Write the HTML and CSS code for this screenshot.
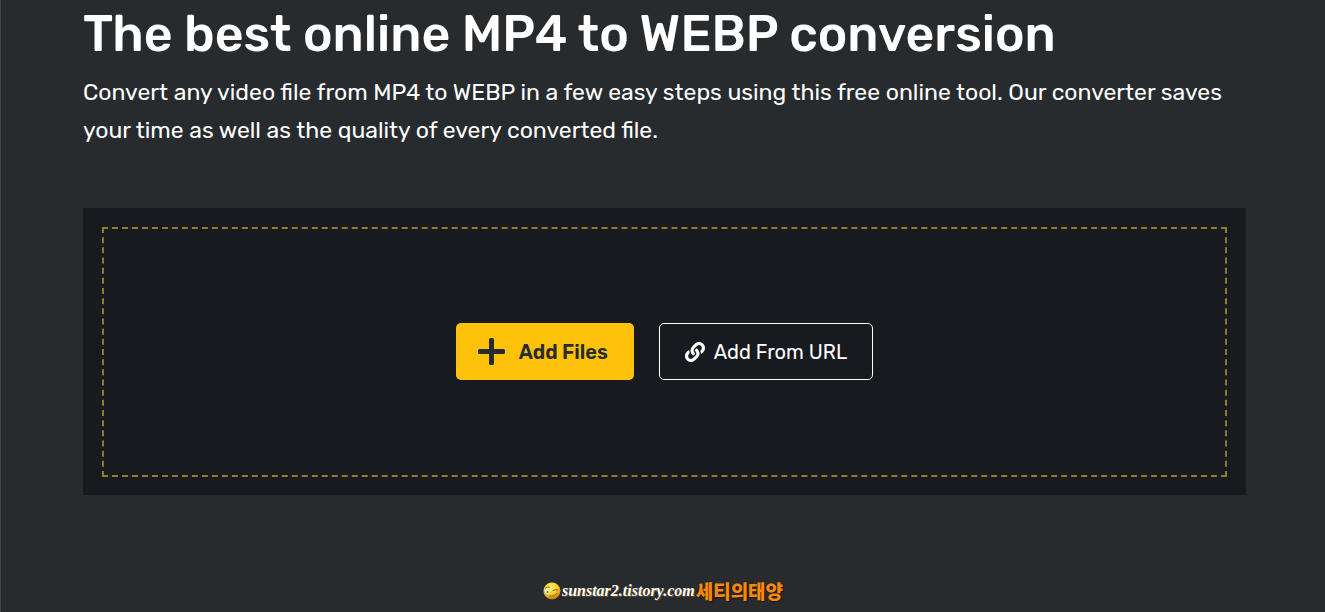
FILE: index.html
```
<!DOCTYPE html>
<html lang="en">
<head>
    <meta charset="UTF-8">
    <meta name="viewport" content="width=device-width, initial-scale=1.0">
    <title>MP4 to WEBP Converter</title>
    <link rel="stylesheet" href="styles.css">
</head>
<body>

<main class="container">
    <h1>The best online MP4 to WEBP conversion</h1>
    <p class="intro">Convert any video file from MP4 to WEBP in a few easy steps using this free online tool. Our converter saves your time as well as the quality of every converted file.</p>

    <!-- Upload area -->
    <div class="upload">
        <div class="drop-area">
            <button type="button" class="btn btn-files">
                <svg class="icon-plus" viewBox="0 0 27 27" aria-hidden="true">
                    <path fill="currentColor" d="M12.500 0h2a1.500 1.500 0 0 1 1.500 1.500V11h9.500A1.500 1.500 0 0 1 27 12.500v2a1.500 1.500 0 0 1-1.500 1.500H16v9.500a1.500 1.500 0 0 1-1.500 1.500h-2a1.500 1.500 0 0 1-1.500-1.500V16H1.500A1.500 1.500 0 0 1 0 14.500v-2A1.500 1.500 0 0 1 1.500 11H11V1.500A1.500 1.500 0 0 1 12.500 0z"/>
                </svg>
                Add Files
            </button>
            <button type="button" class="btn btn-url">
                <svg class="icon-link" viewBox="0 0 512 512" aria-hidden="true">
                    <path fill="currentColor" d="M326.612 185.391c59.747 59.809 58.927 155.698.36 214.59-.11.12-.24.25-.36.37l-67.2 67.2c-59.27 59.27-155.699 59.262-214.96 0-59.27-59.26-59.27-155.7 0-214.96l37.106-37.106c9.84-9.84 26.786-3.3 27.294 10.606.648 17.722 3.826 35.527 9.69 52.721 1.986 5.822.567 12.262-3.783 16.612l-13.087 13.087c-28.026 28.026-28.905 73.660-1.155 101.960 28.024 28.579 74.086 28.749 102.325.510l67.200-67.190c28.191-28.191 28.073-73.757 0-101.830-3.701-3.694-7.429-6.564-10.341-8.569a16.037 16.037 0 0 1-6.947-12.606c-.396-10.567 3.348-21.456 11.698-29.806l21.054-21.055c5.521-5.521 14.182-6.199 20.584-1.731a152.482 152.482 0 0 1 20.522 17.197zM467.547 44.449c-59.261-59.262-155.690-59.270-214.960 0l-67.200 67.200c-.12.12-.25.25-.36.37-58.566 58.892-59.387 154.781.36 214.590a152.454 152.454 0 0 0 20.521 17.196c6.402 4.468 15.064 3.789 20.584-1.731l21.054-21.055c8.350-8.350 12.094-19.239 11.698-29.806a16.037 16.037 0 0 0-6.947-12.606c-2.912-2.005-6.640-4.875-10.341-8.569-28.073-28.073-28.191-73.639 0-101.830l67.200-67.190c28.239-28.239 74.300-28.069 102.325.510 27.750 28.300 26.872 73.934-1.155 101.960l-13.087 13.087c-4.350 4.350-5.769 10.790-3.783 16.612 5.864 17.194 9.042 34.999 9.690 52.721.509 13.906 17.454 20.446 27.294 10.606l37.106-37.106c59.271-59.259 59.271-155.699.001-214.959z"/>
                </svg>
                Add From URL
            </button>
        </div>
    </div>
</main>

<footer class="signature">
    <svg class="icon-wink" viewBox="0 0 18 18" aria-hidden="true">
        <defs>
            <radialGradient id="face" cx="40%" cy="30%" r="70%">
                <stop offset="0" stop-color="#fff27a"/>
                <stop offset="0.6" stop-color="#f9cb2c"/>
                <stop offset="1" stop-color="#c87c0c"/>
            </radialGradient>
        </defs>
        <circle cx="9" cy="9" r="8.500" fill="url(#face)"/>
        <ellipse cx="4" cy="9.500" rx="2" ry="2.500" fill="#fff"/>
        <circle cx="4.500" cy="10" r="1.100" fill="#38779b"/>
        <path d="M2.500 6q1.500-1.500 4-1M10 8.500q2-1.500 4.500-.5M6.500 14q4.500 1 7-2.500" fill="none" stroke="#8f5b14" stroke-width="1" stroke-linecap="round"/>
    </svg>
    <span class="site">sunstar2.tistory.com</span>
    <span class="owner" lang="ko">세티의태양</span>
</footer>

</body>
</html>
```
FILE: styles.css
```
* {
    box-sizing: border-box;
}
body {
    margin: 0;
    min-height: 100vh;
    display: flex;
    flex-direction: column;
    background-color: #272b2e;
    border-left: 1px solid #414246;
    color: white;
    font-family: Rubik, Roboto, sans-serif;
}
.container {
    padding: 0 79px 0 82px;
}
h1 {
    margin: 0;
    padding-top: 4px;
    font-size: 50px;
    font-weight: 500;
    line-height: 60px;
}
.intro {
    margin: 9px 0 0;
    font-size: 23px;
    line-height: 38px;
}
.upload {
    margin-top: 59px;
    padding: 19px 19px 18px;
    background-color: #171a1e;
}
.drop-area {
    display: flex;
    justify-content: center;
    align-items: center;
    flex-wrap: wrap;
    gap: 25px;
    min-height: 250px;
    padding-bottom: 1px;
    border: 2px dashed #95792a;
}
.btn {
    display: flex;
    align-items: center;
    height: 57px;
    border-radius: 5px;
    font-family: inherit;
    font-size: 20px;
    cursor: pointer;
}
.btn-files {
    gap: 14px;
    padding: 0 26px 0 22px;
    border: none;
    background-color: #ffc20a;
    color: #272b2e;
    font-weight: 600;
}
.btn-url {
    gap: 9px;
    padding: 0 25px;
    border: 1px solid white;
    background-color: transparent;
    color: white;
}
.icon-plus {
    width: 27px;
    height: 27px;
}
.icon-link {
    width: 20px;
    height: 20px;
}
.signature {
    display: flex;
    justify-content: center;
    align-items: center;
    margin-top: auto;
    padding-bottom: 9px;
    line-height: 24px;
}
.icon-wink {
    width: 18px;
    height: 18px;
    margin-right: 1px;
}
.site {
    font-family: "Liberation Serif", serif;
    font-size: 16px;
    font-style: italic;
    font-weight: 700;
    text-shadow: 1px 1px 1px #704c20;
}
.owner {
    margin-left: 1px;
    color: #f58a0b;
    font-family: "Noto Sans CJK KR", sans-serif;
    font-size: 19px;
    font-weight: 900;
    text-shadow: 1px 1px 1px #211000;
}
```
